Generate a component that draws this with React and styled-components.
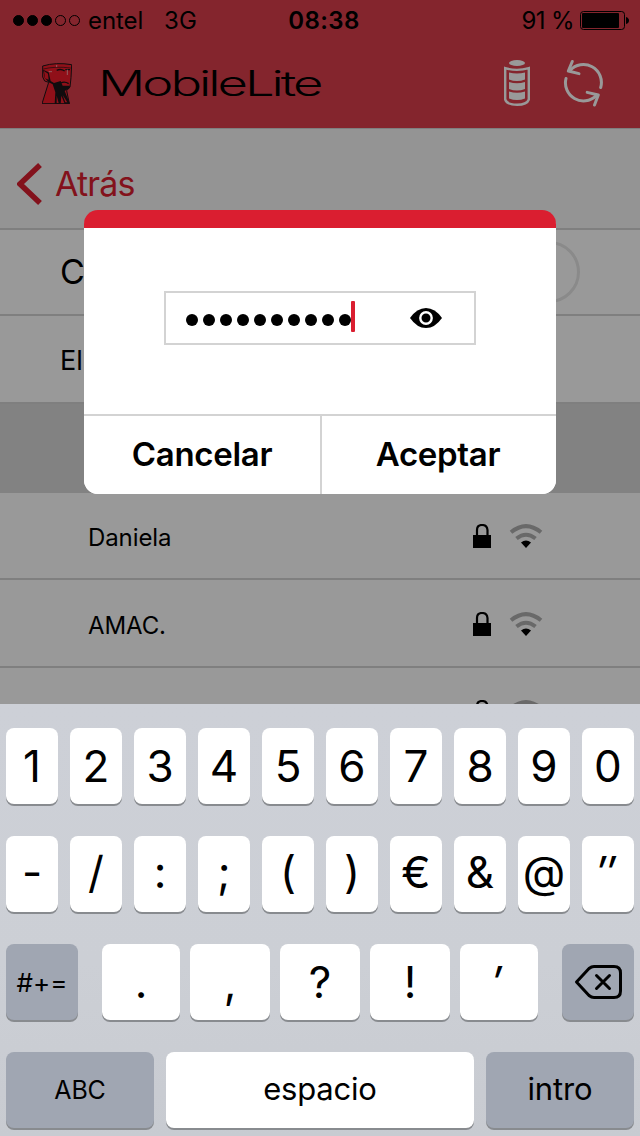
import React, {useState} from 'react';
import styled, {createGlobalStyle} from 'styled-components';

const GlobalStyle = createGlobalStyle`
  * { box-sizing: border-box; }
  body {
    margin: 0;
    font-family: Inter, "Liberation Sans", sans-serif;
    color: #000;
  }
`;

const Screen = styled.div`
  position: relative;
  width: 640px;
  height: 1136px;
  overflow: hidden;
  background: #fff;
`;

const StatusBar = styled.div`
  display: grid;
  grid-template-columns: 1fr auto 1fr;
  align-items: center;
  height: 41px;
  padding: 0 11px 0 13px;
  background: #dc3e4b;
  font-size: 24px;
  line-height: 41px;
  white-space: pre;
`;

const StatusGroup = styled.div`
  display: flex;
  align-items: center;
  justify-content: ${props => props.$end ? 'flex-end' : 'flex-start'};
`;

const Signal = styled.div`
  display: flex;
  gap: 3px;
  margin-right: 8px;
`;

const SignalDot = styled.span`
  width: 11px;
  height: 11px;
  border: 1px solid #000;
  border-radius: 50%;
  background: ${props => props.$on ? '#000' : 'transparent'};
`;

const Carrier = styled.span`
  margin-right: 21px;
  letter-spacing: -0.1px;
`;

const Clock = styled.span`
  font-weight: 600;
  letter-spacing: 0.4px;
  margin-left: 6px;
`;

const Percent = styled.span`
  margin-right: 6px;
  letter-spacing: -0.6px;
`;

const Header = styled.header`
  display: flex;
  align-items: center;
  height: 87px;
  padding: 0 37px 3px 42px;
  background: #dc3e4b;

  svg { flex: none; }
`;

const Brand = styled.h1`
  flex: 1;
  margin: 0 0 0 26px;
  font-size: 35px;
  font-weight: 300;
  line-height: 40px;
  letter-spacing: -2px;
  transform: scaleX(1.5);
  transform-origin: left center;
`;

const HeaderIcons = styled.div`
  display: flex;
  align-items: center;
  gap: 33px;
`;

const BackBar = styled.div`
  display: flex;
  align-items: center;
  height: 102px;
  padding: 10px 0 0 17px;
  border-top: 1px solid #d4d4d4;
  border-bottom: 2px solid #d4d4d4;
  background: #f7f7f7;
  color: #da1e30;
  font-size: 34px;
  font-weight: 400;
  letter-spacing: -0.8px;

  svg { margin-right: 13px; }
`;

const SettingRow = styled.div`
  display: flex;
  align-items: center;
  justify-content: space-between;
  height: ${props => props.$height}px;
  padding: 0 60px;
  border-bottom: 2px solid #d4d4d4;
  font-size: ${props => props.$size}px;
  font-weight: 400;
`;

const SettingLabel = styled.span`
  margin-top: ${props => props.$offset}px;
`;

const Toggle = styled.span`
  width: 102px;
  height: 62px;
  border: 3px solid #e6e6e6;
  border-radius: 31px;
`;

const SectionGap = styled.div`
  height: 89px;
  background: #d9d9d9;
`;

const NetworkRow = styled.div`
  display: flex;
  align-items: center;
  height: ${props => props.$first ? 87 : 88}px;
  padding: ${props => props.$first ? 1 : 2}px 97px 0 88px;
  border-bottom: 2px solid #d4d4d4;
  font-size: 24px;
`;

const NetworkName = styled.span`
  flex: 1;
  padding-top: 2px;
  letter-spacing: -0.1px;
`;

const NetworkIcons = styled.div`
  display: flex;
  gap: 18px;
`;

const Backdrop = styled.div`
  position: absolute;
  inset: 0;
  background: rgba(0, 0, 0, 0.4);
`;

const Dialog = styled.div`
  position: absolute;
  top: 210px;
  left: 84px;
  width: 472px;
  height: 284px;
  display: flex;
  flex-direction: column;
  border-top: 18px solid #da1e30;
  border-radius: 14px;
  background: #fff;
  overflow: hidden;
`;

const DialogBody = styled.div`
  flex: 1;
  display: flex;
  justify-content: center;
  padding-top: 63px;
`;

const PasswordField = styled.div`
  display: flex;
  align-items: center;
  width: 312px;
  height: 54px;
  padding: 0 32px 0 20px;
  border: 2px solid #d3d3d3;
`;

const Bullets = styled.div`
  display: flex;
  flex: 1;
  align-items: center;
  gap: 5px;
  padding-top: 4px;
`;

const Bullet = styled.span`
  width: 12px;
  height: 12px;
  border-radius: 50%;
  background: #000;
`;

const Caret = styled.span`
  width: 4px;
  height: 31px;
  margin: -7px 0 0 -5px;
  border-radius: 1px;
  background: #da1e30;
`;

const EyeButton = styled.button`
  display: flex;
  padding: 0;
  border: 0;
  background: none;
`;

const DialogActions = styled.div`
  display: grid;
  grid-template-columns: 236px 236px;
  height: 80px;
  border-top: 2px solid #d3d3d3;
`;

const ActionButton = styled.button`
  padding: 0 0 2px;
  border: 0;
  background: #fff;
  color: #000;
  font: 600 33px Inter, "Liberation Sans", sans-serif;
  letter-spacing: -0.3px;

  & + & {
    padding-right: 2px;
    border-left: 2px solid #d3d3d3;
  }
`;

const Keyboard = styled.div`
  position: absolute;
  left: 0;
  right: 0;
  bottom: 0;
  height: 432px;
  display: flex;
  flex-direction: column;
  gap: 32px;
  padding: 24px 6px 0;
  background: linear-gradient(#cdd0d7 0%, #cccfd5 60%, #c8cbd1 100%);
`;

const KeyRow = styled.div`
  display: flex;
  gap: ${props => props.$gap || 12}px;
`;

const Key = styled.button`
  display: flex;
  align-items: center;
  justify-content: center;
  width: ${props => props.$width || 52}px;
  height: 76px;
  margin: ${props => props.$margin || 0};
  padding: 0 ${props => props.$slant ? 5 : 0}px ${props => props.$lift || 0}px 0;
  border: 0;
  border-radius: 8px;
  background: ${props => props.$dark ? '#a0a6b2' : '#fff'};
  box-shadow: 0 2px 0 #888b8f;
  color: #000;
  font: 380 ${props => props.$size || 44}px Inter, "Liberation Sans", sans-serif;
  font-style: ${props => props.$slant ? 'italic' : 'normal'};
  letter-spacing: ${props => props.$spacing || 0}px;
`;

const Logo = () => (
  <svg width="30" height="41" viewBox="0 0 90 123">
    <path d="M2 9Q42-3 89 5L87 44 84 72 74 83 82 122H0L20 58 8 54 2 42Z" fill="#f01c2a" stroke="#1b1518" strokeWidth="3" />
    <path d="M4 18Q40 9 86 15" fill="none" stroke="#1b1518" strokeWidth="2" />
    <path d="M3 20L20 28 26 54 36 60 56 54 62 68 84 68 82 76 68 84 84 122H68L58 98 56 122H38L40 88 32 64 20 58 8 44Z" fill="#1b1518" />
    <path d="M6 24L18 32 20 50 9 46Z" fill="#f01c2a" />
    <path d="M44 22Q56 16 68 24M70 20H84M56 60Q68 54 80 62" fill="none" stroke="#1b1518" strokeWidth="4" />
    <path d="M76 20V36M20 26H30M44 6V12" fill="none" stroke="#f39ca4" strokeWidth="3" />
    <path d="M44 98L50 120H44ZM62 96L76 118H70Z" fill="#f01c2a" />
  </svg>
);

const ChargeIcon = () => (
  <svg width="26" height="46" viewBox="0 0 26 46" fill="#fff">
    <ellipse cx="13" cy="3" rx="8" ry="3" />
    <path d="M1.200 8.200Q13 11.500 24.800 8.200V39.500Q23 44.800 13 44.800T1.200 39.500Z" fill="none" stroke="#fff" strokeWidth="2.400" />
    <path d="M5 12.500Q13 14.500 21 12.500V19.500Q13 22.500 5 19.500ZM5 22Q13 24.500 21 22V29Q13 32 5 29ZM5 31.500Q13 34 21 31.500V38.500Q13 41.500 5 38.500Z" />
  </svg>
);

const SyncIcon = () => (
  <svg width="40" height="48" viewBox="0 0 40 48" fill="none" stroke="#fff" strokeWidth="3" strokeLinecap="round" strokeLinejoin="round">
    <path d="M7 11.500A18 18 0 0 1 37.700 28.500M3 19.500A18 18 0 0 0 33 36.800" />
    <path d="M9.300 2.500L5.300 12 16 14.600M24.200 33.400L35.300 36 31.500 46" />
  </svg>
);

const BatteryIcon = () => (
  <svg width="49" height="19" viewBox="0 0 49 19">
    <rect x="0.500" y="0.500" width="44" height="18" rx="3" fill="none" stroke="#000" />
    <rect x="2" y="2" width="37" height="15" rx="1" />
    <path d="M46 6Q49 7 49 9.500T46 13Z" />
  </svg>
);

const BackIcon = () => (
  <svg width="25" height="42" viewBox="0 0 25 42">
    <path d="M23 2L3 21 23 40" fill="none" stroke="#da1e30" strokeWidth="5.500" />
  </svg>
);

const LockIcon = () => (
  <svg width="18" height="24" viewBox="0 0 18 24">
    <path d="M0 11H18V24H0Z" />
    <path d="M4 12V6Q4 1 9 1T14.500 6V12" fill="none" stroke="#000" strokeWidth="2.200" />
  </svg>
);

const WifiIcon = () => (
  <svg width="34" height="24" viewBox="0 0 34 24" fill="none" stroke="#afafaf" strokeWidth="4">
    <path d="M2 8.200Q17-4 32 8.200M7.500 14.500Q17 7 26.500 14.500" />
    <path d="M12 18.500Q17 14.500 22 18.500L17 24Z" fill="#000" stroke="none" />
  </svg>
);

const EyeIcon = () => (
  <svg width="32" height="20" viewBox="0 0 32 20">
    <path d="M0 10Q7 0 16 0T32 10Q25 20 16 20T0 10Z" />
    <circle cx="16" cy="10" r="5.700" stroke="#fff" strokeWidth="2.400" />
  </svg>
);

const DeleteIcon = () => (
  <svg width="48" height="36" viewBox="0 0 48 36" fill="none" stroke="#000" strokeWidth="3" strokeLinecap="round" strokeLinejoin="round">
    <path d="M2.500 18L15 4.500Q17.500 2.500 20 2.500H40Q46.500 2.500 46.500 9V27Q46.500 33.500 40 33.500H20Q17.500 33.500 15 31.500Z" />
    <path d="M22.500 11.500L35.500 24.500M35.500 11.500L22.500 24.500" />
  </svg>
);

const networks = ['Daniela', 'AMAC.', 'casa faubel'];
const digits = ['1', '2', '3', '4', '5', '6', '7', '8', '9', '0'];
const symbols = ['-', '/', ':', ';', '(', ')', '€', '&', '@', '″'];

function App() {
  const [length, setLength] = useState(10);
  const type = () => setLength(prev => Math.min(prev + 1, 12));

  return (
    <Screen>
      <GlobalStyle />
      <StatusBar>
        <StatusGroup>
          <Signal>
            {[1, 2, 3, 4, 5].map(n => <SignalDot key={n} $on={n <= 3} />)}
          </Signal>
          <Carrier>entel</Carrier>
          <span>3G</span>
        </StatusGroup>
        <Clock>08:38</Clock>
        <StatusGroup $end>
          <Percent>91 %</Percent>
          <BatteryIcon />
        </StatusGroup>
      </StatusBar>
      <Header>
        <Logo />
        <Brand>MobileLite</Brand>
        <HeaderIcons>
          <ChargeIcon />
          <SyncIcon />
        </HeaderIcons>
      </Header>

      <BackBar><BackIcon />Atrás</BackBar>
      <SettingRow $height={86} $size={34}>
        <SettingLabel $offset={-2}>C</SettingLabel>
        <Toggle />
      </SettingRow>
      <SettingRow $height={88} $size={27}>
        <SettingLabel $offset={2}>El</SettingLabel>
      </SettingRow>
      <SectionGap />
      {networks.map((name, i) => (
        <NetworkRow key={name} $first={i === 0}>
          <NetworkName>{name}</NetworkName>
          <NetworkIcons><LockIcon /><WifiIcon /></NetworkIcons>
        </NetworkRow>
      ))}

      <Backdrop />
      <Dialog>
        <DialogBody>
          <PasswordField>
            <Bullets>
              {Array.from({length}, (_, i) => <Bullet key={i} />)}
              <Caret />
            </Bullets>
            <EyeButton><EyeIcon /></EyeButton>
          </PasswordField>
        </DialogBody>
        <DialogActions>
          <ActionButton>Cancelar</ActionButton>
          <ActionButton>Aceptar</ActionButton>
        </DialogActions>
      </Dialog>

      <Keyboard>
        <KeyRow>
          {digits.map(k => <Key key={k} onClick={type}>{k}</Key>)}
        </KeyRow>
        <KeyRow>
          {symbols.map(k => <Key key={k} $lift={4} $slant={k === '″'} onClick={type}>{k}</Key>)}
        </KeyRow>
        <KeyRow $gap={10}>
          <Key $dark $width={72} $size={26} $margin="0 14px 0 0">#+=</Key>
          <Key $width={78} onClick={type}>.</Key>
          <Key $width={80} onClick={type}>,</Key>
          <Key $width={80} onClick={type}>?</Key>
          <Key $width={80} onClick={type}>!</Key>
          <Key $width={78} $slant onClick={type}>′</Key>
          <Key $dark $width={72} $margin="0 0 0 14px" onClick={() => setLength(prev => Math.max(prev - 1, 0))}>
            <DeleteIcon />
          </Key>
        </KeyRow>
        <KeyRow>
          <Key $dark $width={148} $size={25} $spacing={-0.2}>ABC</Key>
          <Key $width={308} $size={31} $lift={3} $spacing={-0.2}>espacio</Key>
          <Key $dark $width={148} $size={31} $lift={3} $spacing={-0.1}>intro</Key>
        </KeyRow>
      </Keyboard>
    </Screen>
  );
}

export default App;
